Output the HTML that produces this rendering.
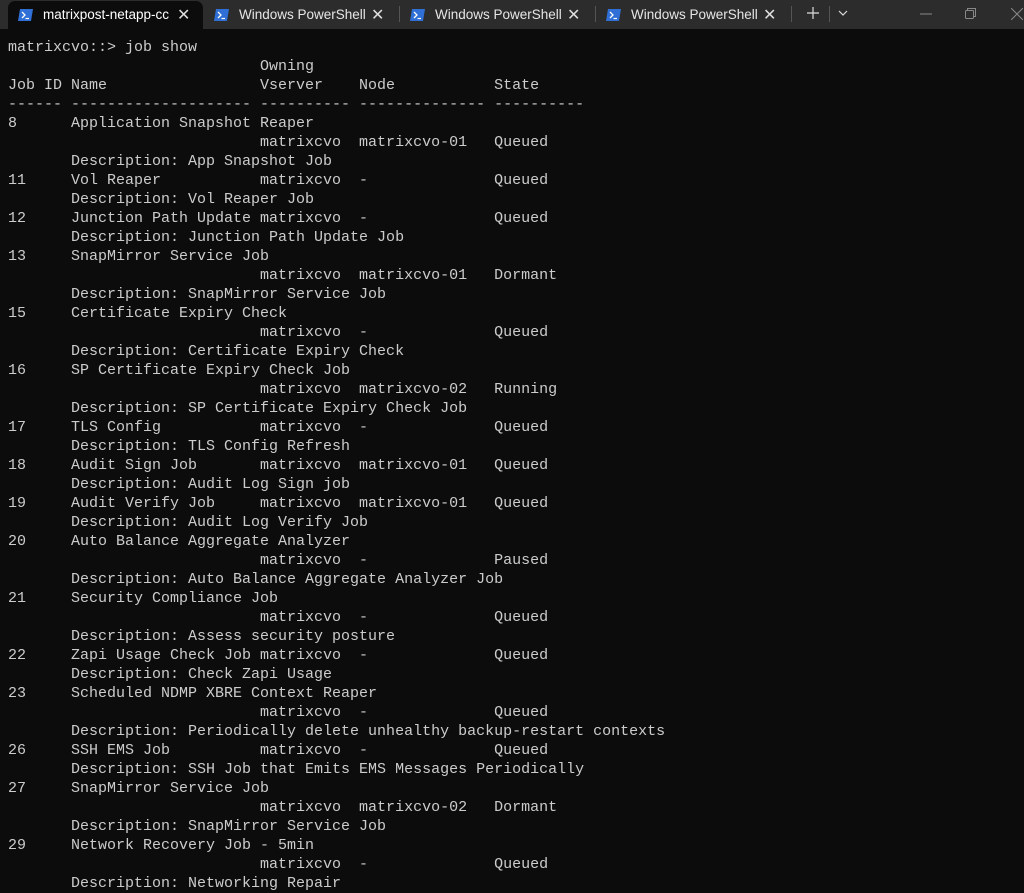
<!DOCTYPE html>
<html><head><meta charset="utf-8"><style>
html,body{margin:0;padding:0;width:1024px;height:893px;overflow:hidden;background:#0c0c0c}
.bar{position:absolute;left:0;top:0;width:1024px;height:29px;background:#2c2c2c}
.tab{position:absolute;top:1px;height:28px;font:13.5px "Liberation Sans",sans-serif;color:#e6e6e6}
.tab.act{background:#0c0c0c;border-radius:7px 7px 0 0;color:#fff}
.tab .ic{position:absolute;left:10px;top:8px;width:15px;height:12px}
.tab .t{position:absolute;left:35px;top:6px;white-space:nowrap;overflow:hidden}
.tab .x{position:absolute;top:4px;font-size:16px;color:#ddd}
.sep{position:absolute;top:6px;width:1px;height:16px;background:#555}
pre{position:absolute;left:8px;top:38px;margin:0;font:15px/19px "Liberation Mono",monospace;color:#cccccc;letter-spacing:0}
</style></head><body>
<div class="bar">
 <div class="tab act" style="left:8px;width:195px"><svg class="ic" viewBox="0 0 15 12"><polygon points="2,0 15,0 13,12 0,12" fill="#2f6fd6"/><path d="M4 3 L7 6 L4 9" stroke="#fff" stroke-width="1.3" fill="none"/><path d="M7.5 9.5 H11" stroke="#fff" stroke-width="1.2"/></svg><span class="t" style="width:128px">matrixpost-netapp-cc</span><span class="x" style="left:169px">✕</span></div>
 <div class="tab" style="left:204px;width:193px"><svg class="ic" viewBox="0 0 15 12"><polygon points="2,0 15,0 13,12 0,12" fill="#2f6fd6"/><path d="M4 3 L7 6 L4 9" stroke="#fff" stroke-width="1.3" fill="none"/><path d="M7.5 9.5 H11" stroke="#fff" stroke-width="1.2"/></svg><span class="t">Windows PowerShell</span><span class="x" style="left:167px">✕</span></div>
 <div class="sep" style="left:399px"></div>
 <div class="tab" style="left:400px;width:193px"><svg class="ic" viewBox="0 0 15 12"><polygon points="2,0 15,0 13,12 0,12" fill="#2f6fd6"/><path d="M4 3 L7 6 L4 9" stroke="#fff" stroke-width="1.3" fill="none"/><path d="M7.5 9.5 H11" stroke="#fff" stroke-width="1.2"/></svg><span class="t">Windows PowerShell</span><span class="x" style="left:167px">✕</span></div>
 <div class="sep" style="left:595px"></div>
 <div class="tab" style="left:596px;width:193px"><svg class="ic" viewBox="0 0 15 12"><polygon points="2,0 15,0 13,12 0,12" fill="#2f6fd6"/><path d="M4 3 L7 6 L4 9" stroke="#fff" stroke-width="1.3" fill="none"/><path d="M7.5 9.5 H11" stroke="#fff" stroke-width="1.2"/></svg><span class="t">Windows PowerShell</span><span class="x" style="left:167px">✕</span></div>
 <div class="sep" style="left:791px"></div>
 <svg style="position:absolute;left:806px;top:6px" width="14" height="14"><path d="M7 1V13M1 7H13" stroke="#ddd" stroke-width="1.2"/></svg>
 <div class="sep" style="left:829px"></div>
 <svg style="position:absolute;left:838px;top:9px" width="10" height="8"><path d="M1 2L5 6L9 2" stroke="#ddd" stroke-width="1.2" fill="none"/></svg>
 <svg style="position:absolute;left:920px;top:13px" width="12" height="2"><path d="M0 1H12" stroke="#888" stroke-width="1"/></svg>
 <svg style="position:absolute;left:965px;top:8px" width="12" height="12"><rect x="0.5" y="2.5" width="8" height="8" rx="1" stroke="#888" fill="none"/><path d="M2.5 2.5V0.5H10.5V8.5H8.5" stroke="#888" fill="none"/></svg>
 <svg style="position:absolute;left:1011px;top:8px" width="12" height="12"><path d="M0 0L12 12M12 0L0 12" stroke="#888" stroke-width="1"/></svg>
</div>
<pre>matrixcvo::> job show
                            Owning
Job ID Name                 Vserver    Node           State
------ -------------------- ---------- -------------- ----------
8      Application Snapshot Reaper
                            matrixcvo  matrixcvo-01   Queued
       Description: App Snapshot Job
11     Vol Reaper           matrixcvo  -              Queued
       Description: Vol Reaper Job
12     Junction Path Update matrixcvo  -              Queued
       Description: Junction Path Update Job
13     SnapMirror Service Job
                            matrixcvo  matrixcvo-01   Dormant
       Description: SnapMirror Service Job
15     Certificate Expiry Check
                            matrixcvo  -              Queued
       Description: Certificate Expiry Check
16     SP Certificate Expiry Check Job
                            matrixcvo  matrixcvo-02   Running
       Description: SP Certificate Expiry Check Job
17     TLS Config           matrixcvo  -              Queued
       Description: TLS Config Refresh
18     Audit Sign Job       matrixcvo  matrixcvo-01   Queued
       Description: Audit Log Sign job
19     Audit Verify Job     matrixcvo  matrixcvo-01   Queued
       Description: Audit Log Verify Job
20     Auto Balance Aggregate Analyzer
                            matrixcvo  -              Paused
       Description: Auto Balance Aggregate Analyzer Job
21     Security Compliance Job
                            matrixcvo  -              Queued
       Description: Assess security posture
22     Zapi Usage Check Job matrixcvo  -              Queued
       Description: Check Zapi Usage
23     Scheduled NDMP XBRE Context Reaper
                            matrixcvo  -              Queued
       Description: Periodically delete unhealthy backup-restart contexts
26     SSH EMS Job          matrixcvo  -              Queued
       Description: SSH Job that Emits EMS Messages Periodically
27     SnapMirror Service Job
                            matrixcvo  matrixcvo-02   Dormant
       Description: SnapMirror Service Job
29     Network Recovery Job - 5min
                            matrixcvo  -              Queued
       Description: Networking Repair</pre>
</body></html>
